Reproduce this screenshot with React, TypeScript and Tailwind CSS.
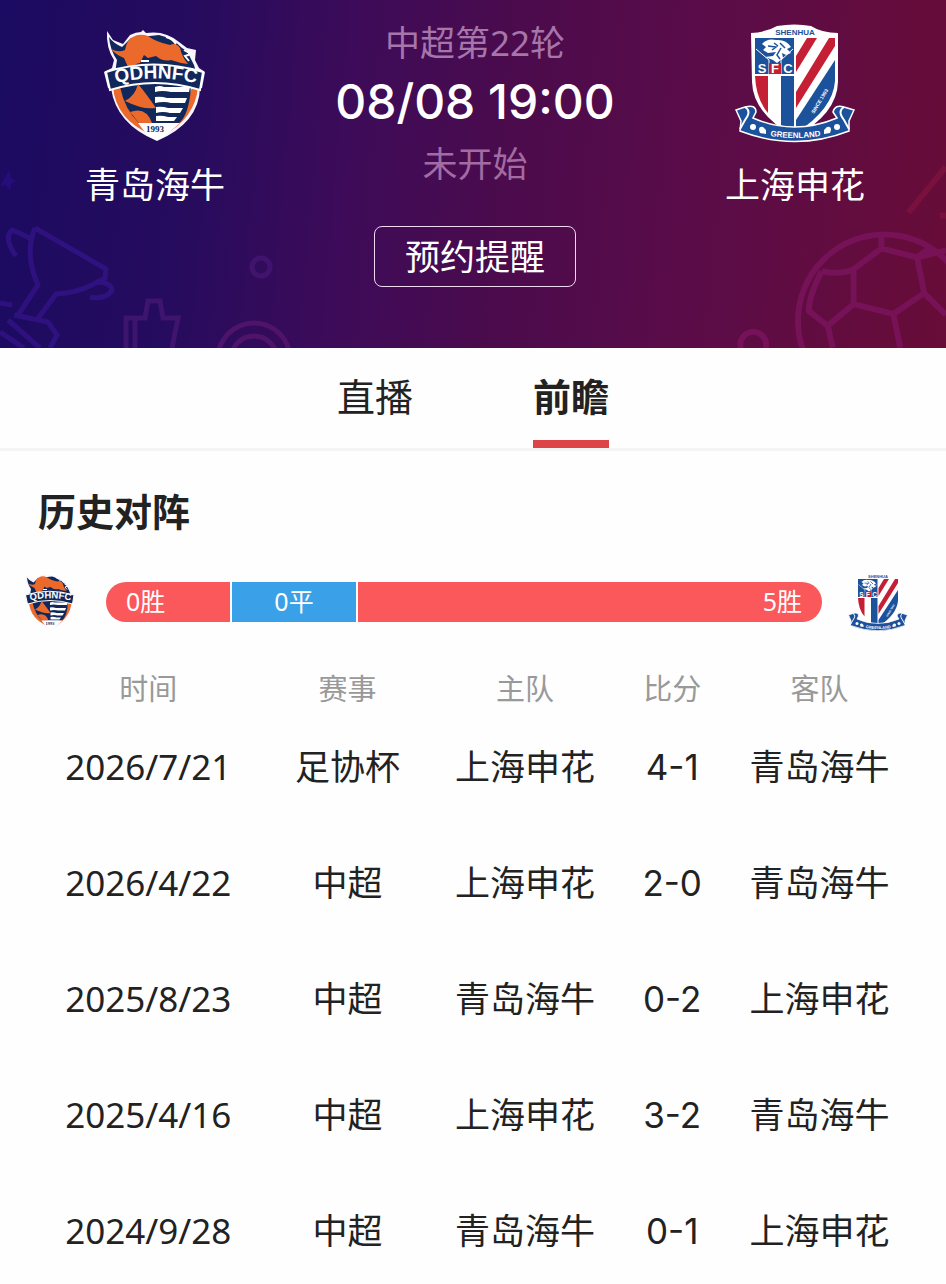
import { useId } from "react";

const matches = [
  { date: "2026/7/21", cup: "足协杯", home: "上海申花", score: "4-1", away: "青岛海牛" },
  { date: "2026/4/22", cup: "中超", home: "上海申花", score: "2-0", away: "青岛海牛" },
  { date: "2025/8/23", cup: "中超", home: "青岛海牛", score: "0-2", away: "上海申花" },
  { date: "2025/4/16", cup: "中超", home: "上海申花", score: "3-2", away: "青岛海牛" },
  { date: "2024/9/28", cup: "中超", home: "青岛海牛", score: "0-1", away: "上海申花" },
];

function HainiuLogo({ className }: { className: string }) {
  const arc = useId();

  return (
    <svg viewBox="0 0 104 112" className={className} role="img" aria-label="青岛海牛">
      <path d="M4 1 L10 10 L20 14 L27 5 Q33 2 38 2 L40 0 L43 3 Q62 0 76 12 L84 18 L93 20 L92 30 L96 38 L102 42 L99 58 L97 58 Q96 93 54 111 Q13 94 8 58 L5 58 L1 42 L9 38 L11 30 Q3 18 4 1Z" fill="#f8f5ff" />
      <path d="M6 7 Q10 13 19 17 L28 8 L56 5 Q70 8 79 18 L84 21 L91 35 L93 42 Q50 30 12 43 L14 30 Q7 20 6 7Z" fill="#12285a" />
      <path d="M10 57 Q13 90 49 105 Q28 88 18 58Z" fill="#ea692b" />
      <path d="M95 57 Q92 88 61 105 Q79 86 89 58Z" fill="#ea692b" />
      <path d="M8 19 Q16 23 22 20 Q24 9 30 7 Q36 3 45 6 Q53 12 67 15 Q73 12 77 18 Q79 27 85 34 Q76 33 68 30 Q60 32 53 26 L45 28 L41 25 L37 33 Q30 34 29 40 L25 37 L21 28 Q13 25 8 19Z" fill="#ea692b" />
      <path d="M63 7 Q70 9 73 14 M81 20 L88 24 L82 26 L86 31" fill="none" stroke="#fff" strokeWidth="2" />
      <path d="M17 57 Q52 44 88 57 Q86 85 76 93 L36 93 Q22 80 17 57Z" fill="#12285a" />
      <path d="M3 42 Q50 27 100 42 L97 60 Q52 46 7 60Z" fill="#12285a" stroke="#fff" strokeWidth="2" />
      <path d="M38 31 H46" stroke="#fff" strokeWidth="2" />
      <path id={arc} d="M9 54 Q52 43 97 54" fill="none" />
      <text fill="#fff" fontFamily="Liberation Sans" fontSize="19" fontWeight="bold">
        <textPath href={`#${arc}`} startOffset="50%" textAnchor="middle">QDHNFC</textPath>
      </text>
      <path d="M35 54 Q42 62 53 78 Q40 80 22 71 Q32 66 35 54Z" fill="#ea692b" />
      <path d="M27 82 Q43 76 49 93 L36 93Z" fill="#ea692b" />
      <g fill="#fff">
        <path d="M52 57 Q57 55 61 57 H87 L86 62 H68 Q59 60 52 62Z" />
        <path d="M52 67 Q58 66 64 68 H84 L82 73 H68 Q61 71 52 73Z" />
        <path d="M53 77 Q59 76 65 78 H80 L77 83 H67 Q60 81 53 83Z" />
        <path d="M53 86 Q59 85 65 87 H74 L71 91 H53Z" />
      </g>
      <path d="M35 93 H77 L62 106 L53 110 L44 105Z" fill="#fff" />
      <text x="52" y="102" textAnchor="middle" fill="#12285a" fontFamily="Liberation Serif" fontSize="9" fontWeight="bold">1993</text>
    </svg>
  );
}

function ShenhuaLogo({ className }: { className: string }) {
  const arc = useId();

  return (
    <svg viewBox="0 0 120 120" className={className} role="img" aria-label="上海申花">
      <path d="M16 9 Q32 8 42 2 Q60 -1 76 2 Q87 9 103 9 V58 Q102 90 60 113 Q18 90 17 58Z" fill="#fff" />
      <text x="60" y="11" textAnchor="middle" fill="#1c519c" fontFamily="Liberation Sans" fontSize="8" fontWeight="bold">SHENHUA</text>
      <path d="M20 14 H59 V50 H20Z" fill="#1c519c" />
      <path d="M20 52 H33 V89 Q21 75 20 52Z" fill="#c51f35" />
      <path d="M46 52 H59 V109 Q52 106 46 101Z" fill="#1c519c" />
      <path d="M61 32 L72 14 H82 L61 48Z M61 68 L94 14 H100 V22 L61 84Z" fill="#c51f35" />
      <path d="M61 96 L100 36 V57 Q98 85 61 109Z" fill="#1c519c" />
      <path d="M21 25 L34 36 V50 H46 V36 L58 25" fill="none" stroke="#fff" strokeWidth="1" />
      <path d="M27 20 Q32 14 41 16 Q51 15 56 23 L52 25 L56 29 L51 31 L47 29 L48 34 L42 39 L38 36 L30 33 L38 32 L41 28 L33 29 L28 26 L31 23Z" fill="#fff" />
      <path d="M33 22 L41 23 L37 26 M45 19 L50 24 M46 24 L42 31 L45 35 M39 19 L43 22" fill="none" stroke="#1c519c" strokeWidth="1.5" />
      <path d="M34 39 H46 V50 H34Z" fill="#c51f35" />
      <g fill="#fff" fontFamily="Liberation Sans" fontSize="13" fontWeight="bold" textAnchor="middle">
        <text x="27" y="49">S</text>
        <text x="40" y="49">F</text>
        <text x="53" y="49">C</text>
      </g>
      <text transform="translate(79 90) rotate(-59)" fill="#fff" fontFamily="Liberation Sans" fontSize="5" fontWeight="bold">SINCE 1993</text>
      <path d="M1 86 L10 83 Q21 80 21 88 L18 94 Q59 112 102 94 L98 88 Q100 80 109 83 L119 86 L114 97 L114 107 Q60 128 5 107 L6 97Z" fill="#1c519c" stroke="#fff" strokeWidth="1.5" />
      <path d="M10 83 Q17 87 10 96 L5 105 M109 83 Q102 87 109 96 L114 105" fill="none" stroke="#fff" strokeWidth="2" />
      <path id={arc} d="M30 111 Q60 117 91 111" fill="none" />
      <text fill="#fff" fontFamily="Liberation Sans" fontSize="8" fontWeight="bold">
        <textPath href={`#${arc}`} startOffset="50%" textAnchor="middle">GREENLAND</textPath>
      </text>
      <g fill="#fff">
        <circle cx="18" cy="103" r="3" />
        <path d="M24 106 Q24 102 28 103 L31 106 V110 L25 109Z" />
        <path d="M96 106 Q96 102 92 103 L89 106 V110 L95 109Z" />
        <circle cx="102" cy="103" r="3" />
      </g>
    </svg>
  );
}

function LeftDecoration() {
  return (
    <svg viewBox="0 0 320 190" className="absolute bottom-0 left-0 w-80" fill="none" strokeWidth="5" aria-hidden="true">
      <path d="M9 12 L11 20 L16 23 L11 26 L10 33 L6 27 L0 28 L4 21Z" fill="#2b1189" opacity="0.6" />
      <g stroke="#34148a" opacity="0.75">
        <path d="M35 70 L106 111 L105 120 L92 127 Q76 135 56 136 L36 163" />
        <path d="M35 70 Q24 96 38 127 L18 157 M31 81 Q20 75 12 72 Q3 80 16 98 M96 124 Q112 124 112 133 Q104 142 90 139" />
        <path d="M0 145 L12 147 M14 157 L48 164 L57 177 L50 190 M8 162 L40 190 M0 174 L24 190" />
      </g>
      <g stroke="#461774" opacity="0.75">
        <path d="M126 190 V160 H145 L148 143 H160 L163 160 H178 L172 190 M135 162 V190" />
        <circle cx="261" cy="109" r="9" />
      </g>
      <g stroke="#591670" opacity="0.75">
        <circle cx="254" cy="201" r="36" />
        <circle cx="254" cy="201" r="23" />
      </g>
    </svg>
  );
}

function RightDecoration() {
  return (
    <svg viewBox="0 0 306 190" className="absolute right-0 bottom-0 w-76" fill="none" stroke="#7d1460" strokeWidth="6" opacity="0.75" aria-hidden="true">
      <circle cx="112" cy="187" r="13" />
      <path d="M306 8 L268 54 M300 57 H306" stroke="#80133f" />
      <circle cx="244" cy="163" r="87" />
      <path d="M181 113 Q200 117 213 111 L241 90 L277 99 L306 92 M241 90 V77 M292 88 L277 99 M181 113 Q168 137 168 153 L187 168 L192 190 M213 111 V146 L187 168 M213 146 L253 156 L260 190 M253 156 L284 135 L277 99 M284 135 L306 157" />
    </svg>
  );
}

function Team({ name, children }: { name: string; children: React.ReactNode }) {
  return (
    <div className="flex w-[302px] flex-col items-center pt-6">
      {children}
      <p className="mt-[18px] text-[35px] leading-[46px]">{name}</p>
    </div>
  );
}

function MatchHeader() {
  return (
    <header className="relative h-[348px] overflow-hidden bg-linear-[95deg,#1b0b62_0%,#260b5e_20%,#3d0b59_37%,#4b0b4d_53%,#5b0c48_74%,#680c38_100%] text-white">
      <LeftDecoration />
      <RightDecoration />
      <div className="relative flex justify-between pl-1">
        <Team name="青岛海牛">
          <HainiuLogo className="mt-1 h-[116px] w-[104px]" />
        </Team>
        <div className="flex flex-1 flex-col items-center pt-5 whitespace-nowrap">
          <p className="text-[35px] leading-[46px] text-[#a675a9]">中超第22轮</p>
          <h1 className="font-[Inter,sans-serif] text-[48px] leading-[72px] font-medium">08/08 19:00</h1>
          <p className="text-[35px] leading-[52px] text-[#a26ba2]">未开始</p>
          <button className="mt-9 h-[61px] w-[202px] rounded-lg border border-[#f0d8f0] text-[35px] leading-[46px]">
            预约提醒
          </button>
        </div>
        <Team name="上海申花">
          <ShenhuaLogo className="h-[120px] w-[120px]" />
        </Team>
      </div>
    </header>
  );
}

function Tabs() {
  return (
    <nav className="flex h-[103px] justify-center gap-[120px] border-b-3 border-[#f5f5f5] text-[38px]">
      <button className="h-[100px] pb-1">直播</button>
      <button className="h-[100px] border-b-8 border-[#dd4448] pt-1 font-bold">前瞻</button>
    </nav>
  );
}

function History() {
  return (
    <section>
      <h2 className="mt-8 pl-[38px] text-[38px] leading-[56px] font-bold">历史对阵</h2>
      <div className="mt-[33px] flex items-center pr-[38px] pl-6">
        <HainiuLogo className="h-[56px] w-[52px]" />
        <div className="mr-[26px] ml-[30px] flex h-10 flex-1 gap-[2px] overflow-hidden rounded-full text-[25px] leading-[38px] text-white">
          <div className="w-[124px] bg-[#fa585b] pl-5">0胜</div>
          <div className="w-[124px] bg-[#3aa0e8] text-center">0平</div>
          <div className="flex-1 bg-[#fa585b] pr-5 text-right">5胜</div>
        </div>
        <ShenhuaLogo className="h-[60px] w-[60px]" />
      </div>
      <div className="mt-7 px-10">
        <table className="w-full table-fixed text-center whitespace-nowrap">
          <thead>
            <tr className="h-[58px] text-[29px] text-[#999]">
              <th className="w-[25%] font-normal">时间</th>
              <th className="w-[21%] font-normal">赛事</th>
              <th className="w-[20%] font-normal">主队</th>
              <th className="w-[14%] font-normal">比分</th>
              <th className="w-[20%] font-normal">客队</th>
            </tr>
          </thead>
          <tbody>
            {matches.map((match) => (
              <tr key={match.date} className="h-[116px] align-top text-[35px] leading-[98px]">
                <td>{match.date}</td>
                <td>{match.cup}</td>
                <td>{match.home}</td>
                <td className="font-[Inter,sans-serif]">{match.score}</td>
                <td>{match.away}</td>
              </tr>
            ))}
          </tbody>
        </table>
      </div>
    </section>
  );
}

export default function App() {
  return (
    <main
      className='overflow-hidden bg-[#fefefe] font-["Noto_Sans","Noto_Sans_CJK_SC",sans-serif] text-[#222]'
      lang="zh-CN"
    >
      <MatchHeader />
      <Tabs />
      <History />
    </main>
  );
}
